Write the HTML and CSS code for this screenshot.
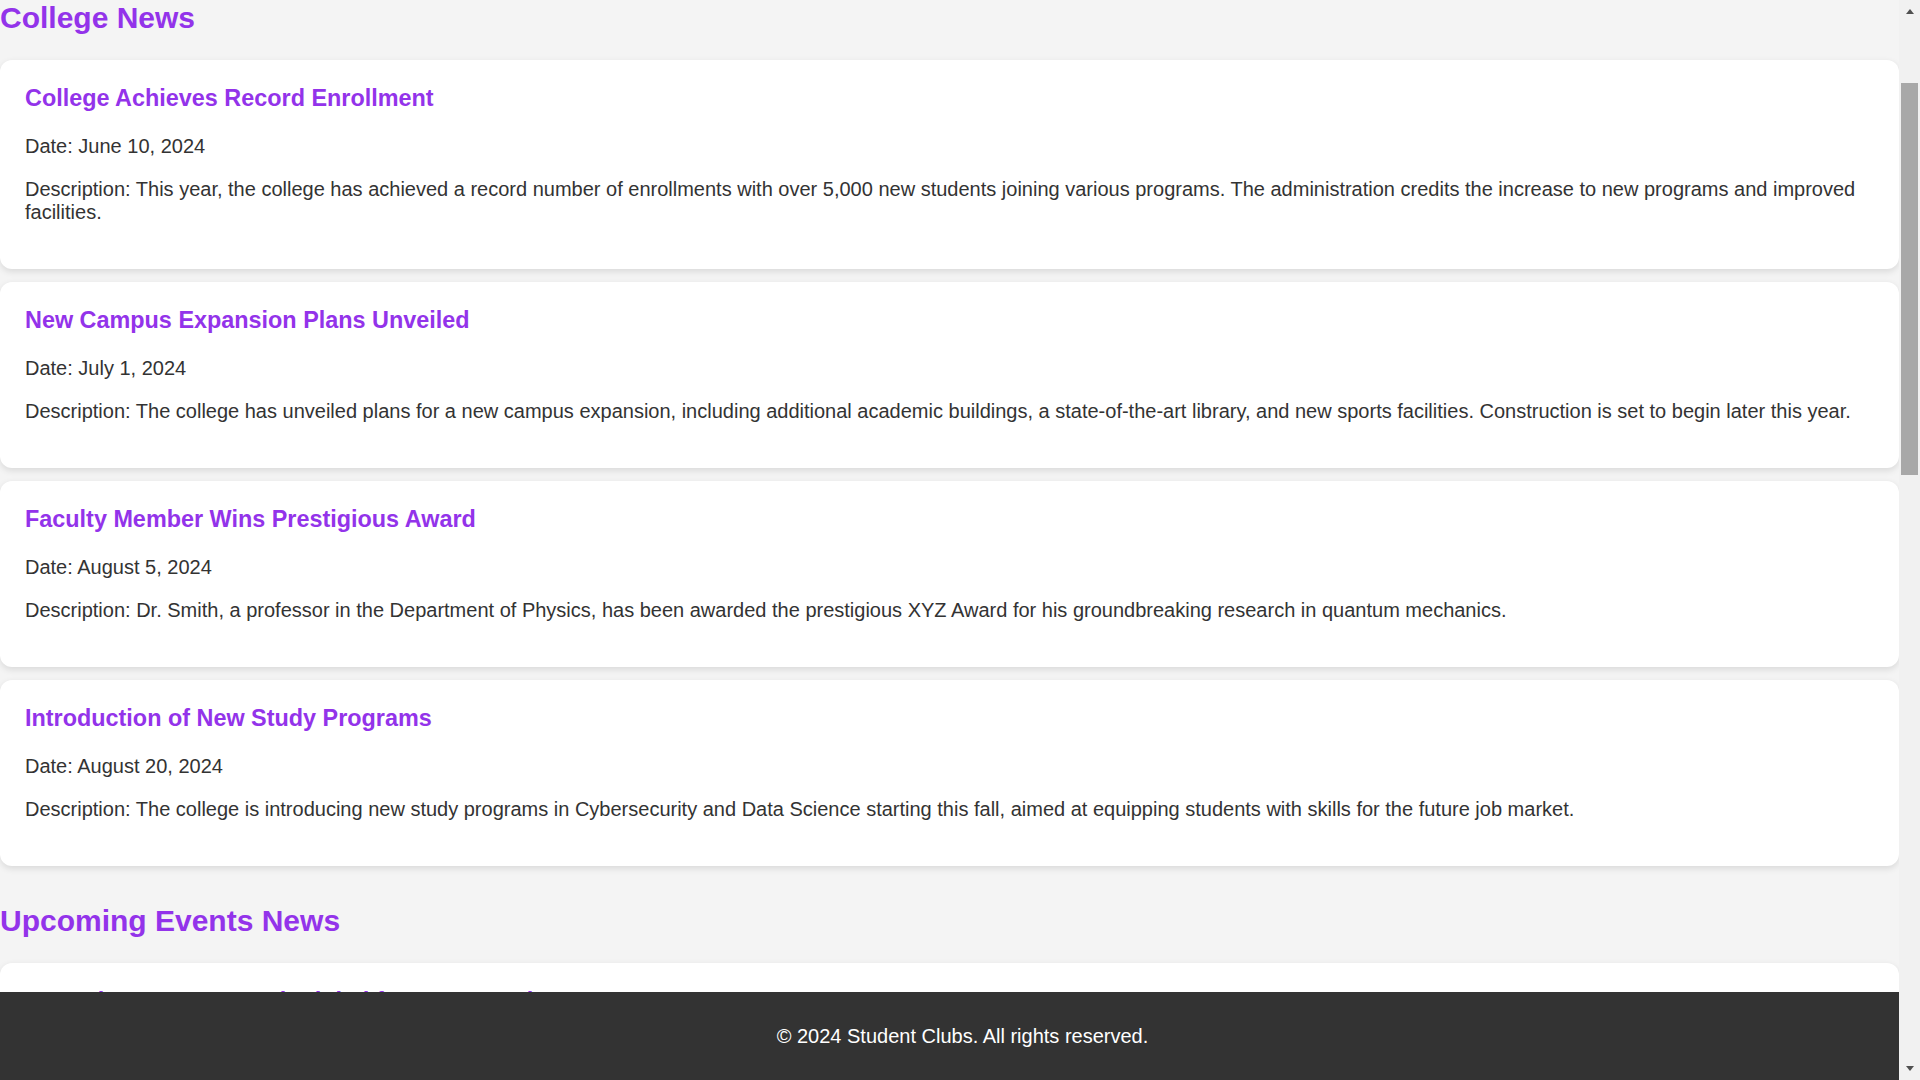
FILE: index.html
```html
<!DOCTYPE html>
<html lang="en">
<head>
<meta charset="utf-8">
<title>College News - Student Clubs</title>
<link rel="stylesheet" href="styles.css">
</head>
<body>
<main class="content">
  <section class="news-section">
    <h2 class="section-title">College News</h2>
    <article class="news-card">
      <h3 class="news-title">College Achieves Record Enrollment</h3>
      <p class="news-text">Date: June 10, 2024</p>
      <p class="news-text">Description: This year, the college has achieved a record number of enrollments with over 5,000 new students joining various programs. The administration credits the increase to new programs and improved facilities.</p>
    </article>
    <article class="news-card">
      <h3 class="news-title">New Campus Expansion Plans Unveiled</h3>
      <p class="news-text">Date: July 1, 2024</p>
      <p class="news-text">Description: The college has unveiled plans for a new campus expansion, including additional academic buildings, a state-of-the-art library, and new sports facilities. Construction is set to begin later this year.</p>
    </article>
    <article class="news-card">
      <h3 class="news-title">Faculty Member Wins Prestigious Award</h3>
      <p class="news-text">Date: August 5, 2024</p>
      <p class="news-text">Description: Dr. Smith, a professor in the Department of Physics, has been awarded the prestigious XYZ Award for his groundbreaking research in quantum mechanics.</p>
    </article>
    <article class="news-card">
      <h3 class="news-title">Introduction of New Study Programs</h3>
      <p class="news-text">Date: August 20, 2024</p>
      <p class="news-text">Description: The college is introducing new study programs in Cybersecurity and Data Science starting this fall, aimed at equipping students with skills for the future job market.</p>
    </article>
  </section>
  <section class="news-section">
    <h2 class="section-title">Upcoming Events News</h2>
    <article class="news-card">
      <h3 class="news-title">Annual Sports Meet Scheduled for Next Month</h3>
      <p class="news-text">Date: September 15, 2024</p>
      <p class="news-text">Description: The annual sports meet will take place next month, featuring athletics, football, basketball and many more competitions between the student clubs.</p>
    </article>
  </section>
</main>
<footer class="site-footer">
  <p class="footer-text">© 2024 Student Clubs. All rights reserved.</p>
</footer>
<div class="scrollbar" aria-hidden="true">
  <div class="scroll-btn"><span class="arrow-up"></span></div>
  <div class="scroll-track"><div class="scroll-thumb"></div></div>
  <div class="scroll-btn"><span class="arrow-down"></span></div>
</div>
</body>
</html>
```
FILE: styles.css
```css
html {
  background: #f4f4f4;
}
body {
  margin: 0;
  padding-right: 21px;
  background: #f4f4f4;
  color: #333333;
  font-family: "Liberation Sans", Arial, sans-serif;
  font-size: 20px;
}
.content {
  display: flex;
  flex-direction: column;
  padding-bottom: 120px;
}
.news-section {
  display: flex;
  flex-direction: column;
}
.section-title {
  margin: 25px 0;
  color: #9333ea;
  font-size: 30px;
  font-weight: bold;
}
.news-section:first-child .section-title {
  margin-top: 0.5px;
}
.news-card {
  background: #ffffff;
  border-radius: 12px;
  box-shadow: 0 2.5px 6px rgba(0, 0, 0, 0.1);
  padding: 25px 25px;
  margin-bottom: 12.5px;
}
.news-title {
  margin: 0 0 23.6px;
  color: #9333ea;
  font-size: 23.4px;
  font-weight: bold;
}
.news-text {
  margin: 0 0 20px;
  font-size: 20px;
  color: #333333;
}
.site-footer {
  position: fixed;
  left: 0;
  right: 0;
  bottom: 0;
  height: 88px;
  box-sizing: border-box;
  padding-top: 32.5px;
  padding-left: 5px;
  background: #333333;
  color: #ffffff;
  text-align: center;
}
.footer-text {
  margin: 0;
  font-size: 20px;
}
.scrollbar {
  position: fixed;
  top: 0;
  right: 0;
  bottom: 0;
  width: 21px;
  display: flex;
  flex-direction: column;
  background: #f1f1f1;
  z-index: 10;
}
.scroll-btn {
  height: 21px;
  flex: none;
  display: flex;
  align-items: center;
  justify-content: center;
}
.arrow-up {
  width: 0;
  height: 0;
  border-left: 4.5px solid transparent;
  border-right: 4.5px solid transparent;
  border-bottom: 5px solid #505050;
  margin-top: 2px;
}
.arrow-down {
  width: 0;
  height: 0;
  border-left: 4.5px solid transparent;
  border-right: 4.5px solid transparent;
  border-top: 5px solid #505050;
  margin-bottom: 2px;
}
.scroll-track {
  flex: 1;
  display: flex;
  flex-direction: column;
  padding: 0 2px;
}
.scroll-thumb {
  margin-top: 62px;
  height: 392px;
  background: #a8a8a8;
}
```
